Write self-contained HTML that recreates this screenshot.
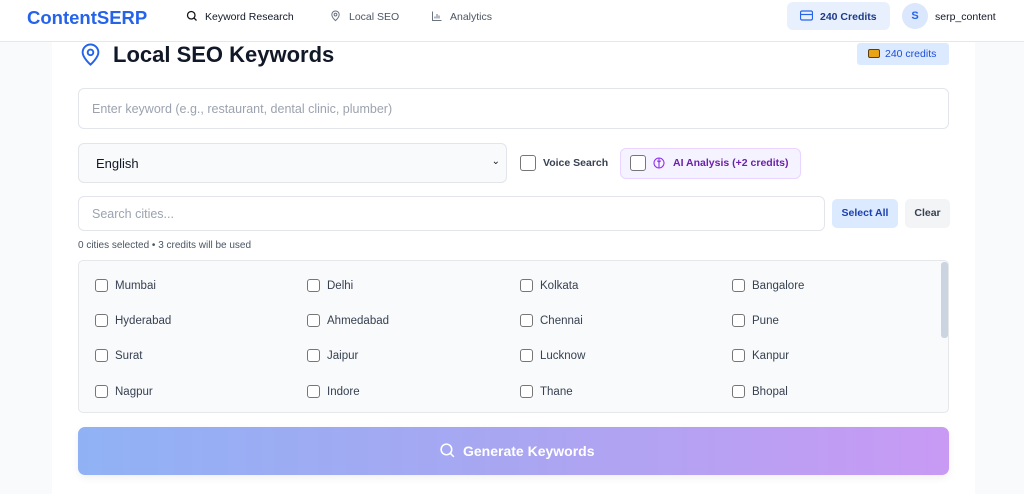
<!DOCTYPE html>
<html><head><meta charset="utf-8"><style>
*{box-sizing:border-box;margin:0;padding:0}
body{width:1024px;height:494px;overflow:hidden;background:#f9fafb;font-family:"Liberation Sans",sans-serif;position:relative;color:#111827}
.a{position:absolute}
.nav{left:0;top:0;width:1024px;height:42px;background:#fff;border-bottom:1px solid #e5e7eb}
.card{left:52px;top:42px;width:923px;height:452px;background:#fff}
.inp{border:1px solid #e2e5ea;border-radius:6px;background:#fff;font-size:13px;color:#9ca3af;padding-left:13px;display:flex;align-items:center}
.cb{width:13px;height:13px;border:1px solid #767676;border-radius:3px;background:#fff}
.city{font-size:11.5px;color:#374151;display:flex;align-items:center;gap:7px}
</style></head><body>
<div class="a nav"></div>
<div class="a" style="left:27px;top:7px;font-size:18.5px;font-weight:bold;color:#2563eb">ContentSERP</div>
<svg class="a" style="left:186px;top:10px" width="12" height="12" viewBox="0 0 24 24" fill="none" stroke="#111" stroke-width="2.5"><circle cx="10.5" cy="10.5" r="7.5"/><path d="M16 16l5 5"/></svg>
<div class="a" style="left:205px;top:11px;font-size:10.5px;color:#111827">Keyword Research</div>
<svg class="a" style="left:330px;top:10px" width="11" height="12" viewBox="0 0 24 24" fill="none" stroke="#6b7280" stroke-width="2.2"><path d="M12 22s-8-7-8-13a8 8 0 0116 0c0 6-8 13-8 13z"/><circle cx="12" cy="9" r="3"/></svg>
<div class="a" style="left:349px;top:11px;font-size:10.5px;color:#4b5563">Local SEO</div>
<svg class="a" style="left:431px;top:10px" width="12" height="12" viewBox="0 0 24 24" fill="none" stroke="#6b7280" stroke-width="2"><path d="M3 3v18h18M8 17v-4M12 17V8M16 17v-6"/></svg>
<div class="a" style="left:450px;top:11px;font-size:10.5px;color:#4b5563">Analytics</div>
<div class="a" style="left:787px;top:2px;width:103px;height:28px;background:#e8f0fe;border-radius:6px"></div>
<svg class="a" style="left:800px;top:10px" width="13" height="11" viewBox="0 0 26 22" fill="none" stroke="#2563eb" stroke-width="2.4"><rect x="1" y="2" width="24" height="18" rx="3"/><path d="M1 9h24"/></svg>
<div class="a" style="left:820px;top:11px;font-size:10.5px;font-weight:bold;color:#1e3a8a">240 Credits</div>
<div class="a" style="left:902px;top:3px;width:26px;height:26px;border-radius:50%;background:#dbe7fd;color:#2563eb;font-size:11px;font-weight:bold;text-align:center;line-height:26px">S</div>
<div class="a" style="left:935px;top:11px;font-size:10.5px;color:#111827">serp_content</div>

<div class="a card"></div>
<svg class="a" style="left:80px;top:43px" width="21" height="24" viewBox="0 0 24 26" fill="none" stroke="#2563eb" stroke-width="2.2"><path d="M12 24s-9-8-9-14a9 9 0 0118 0c0 6-9 14-9 14z"/><circle cx="12" cy="10" r="3.2"/></svg>
<div class="a" style="left:113px;top:42px;font-size:22px;font-weight:bold;color:#111827">Local SEO Keywords</div>
<div class="a" style="left:857px;top:43px;width:92px;height:22px;background:#dbeafe;border-radius:3px"></div>
<div class="a" style="left:868px;top:49px;width:12px;height:9px;background:#e8a317;border:1.5px solid #5a3d0a;border-radius:2px"></div>
<div class="a" style="left:885px;top:48px;font-size:10.5px;color:#1d4ed8">240 credits</div>

<div class="a inp" style="left:78px;top:88px;width:871px;height:41px;font-size:12.5px">Enter keyword (e.g., restaurant, dental clinic, plumber)</div>
<div class="a inp" style="left:78px;top:143px;width:429px;height:40px;background:#f8fafc;color:#111827;padding-left:17px">English<span style="position:absolute;right:6px;top:12px;font-size:10px">&#8964;</span></div>
<div class="a cb" style="left:520px;top:155px;width:16px;height:16px"></div>
<div class="a" style="left:543px;top:157px;font-size:10.5px;font-weight:bold;color:#374151">Voice Search</div>
<div class="a" style="left:620px;top:148px;width:181px;height:31px;background:#f5f3ff;border:1px solid #e9d5ff;border-radius:6px"></div>
<div class="a cb" style="left:630px;top:155px;width:16px;height:16px"></div>
<svg class="a" style="left:653px;top:157px" width="12" height="12" viewBox="0 0 24 24" fill="none" stroke="#9333ea" stroke-width="2.2"><circle cx="12" cy="12" r="10"/><path d="M12 3v18M8 8c2 0 4 1 4 4M16 8c-2 0-4 1-4 4"/></svg>
<div class="a" style="left:673px;top:157px;font-size:10.5px;font-weight:bold;color:#6b21a8">AI Analysis (+2 credits)</div>

<div class="a inp" style="left:78px;top:196px;width:747px;height:35px;font-size:12.5px">Search cities...</div>
<div class="a" style="left:832px;top:199px;width:66px;height:29px;background:#dbeafe;border-radius:5px;font-size:10.5px;font-weight:bold;color:#1e40af;text-align:center;line-height:29px">Select All</div>
<div class="a" style="left:905px;top:199px;width:45px;height:29px;background:#f3f4f6;border-radius:5px;font-size:10.5px;font-weight:bold;color:#374151;text-align:center;line-height:29px">Clear</div>
<div class="a" style="left:78px;top:240px;font-size:10px;color:#4b5563">0 cities selected • 3 credits will be used</div>

<div class="a" style="left:78px;top:260px;width:871px;height:153px;background:#f9fafb;border:1px solid #e5e7eb;border-radius:5px"></div>
<div class="a" style="left:941px;top:262px;width:7px;height:76px;background:#cbd5e1;border-radius:3px"></div>
<div class="a city" style="left:95px;top:279px"><span class="cb"></span>Mumbai</div>
<div class="a city" style="left:307px;top:279px"><span class="cb"></span>Delhi</div>
<div class="a city" style="left:520px;top:279px"><span class="cb"></span>Kolkata</div>
<div class="a city" style="left:732px;top:279px"><span class="cb"></span>Bangalore</div>
<div class="a city" style="left:95px;top:314px"><span class="cb"></span>Hyderabad</div>
<div class="a city" style="left:307px;top:314px"><span class="cb"></span>Ahmedabad</div>
<div class="a city" style="left:520px;top:314px"><span class="cb"></span>Chennai</div>
<div class="a city" style="left:732px;top:314px"><span class="cb"></span>Pune</div>
<div class="a city" style="left:95px;top:349px"><span class="cb"></span>Surat</div>
<div class="a city" style="left:307px;top:349px"><span class="cb"></span>Jaipur</div>
<div class="a city" style="left:520px;top:349px"><span class="cb"></span>Lucknow</div>
<div class="a city" style="left:732px;top:349px"><span class="cb"></span>Kanpur</div>
<div class="a city" style="left:95px;top:385px"><span class="cb"></span>Nagpur</div>
<div class="a city" style="left:307px;top:385px"><span class="cb"></span>Indore</div>
<div class="a city" style="left:520px;top:385px"><span class="cb"></span>Thane</div>
<div class="a city" style="left:732px;top:385px"><span class="cb"></span>Bhopal</div>

<div class="a" style="left:78px;top:427px;width:871px;height:48px;border-radius:7px;background:linear-gradient(90deg,#90b2f5,#a9a6f1 50%,#c89af4);box-shadow:0 3px 8px rgba(0,0,0,0.06)"></div>
<svg class="a" style="left:439px;top:442px" width="17" height="17" viewBox="0 0 24 24" fill="none" stroke="#fff" stroke-width="2.2"><circle cx="10.5" cy="10.5" r="7.5"/><path d="M16 16l5 5"/></svg>
<div class="a" style="left:463px;top:443px;font-size:14px;font-weight:bold;color:#fff">Generate Keywords</div>
</body></html>
